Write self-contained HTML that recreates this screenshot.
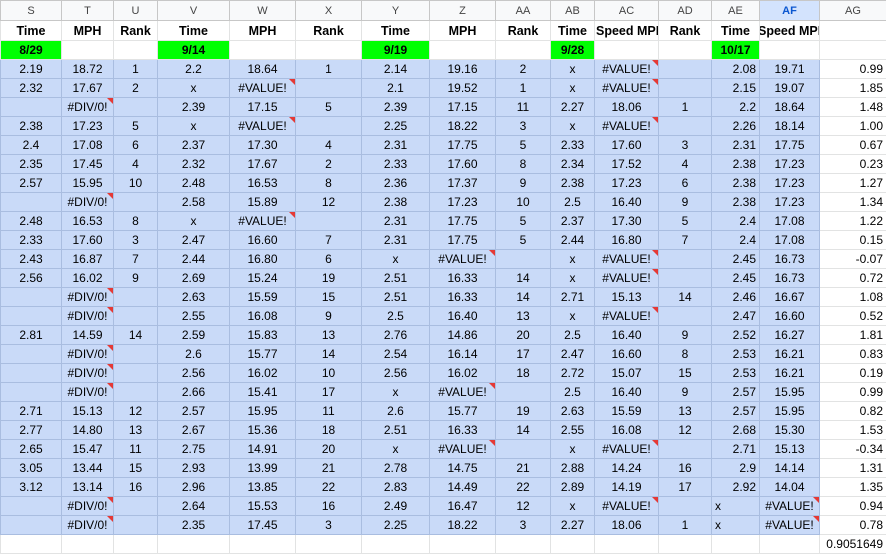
<!DOCTYPE html>
<html><head><meta charset="utf-8"><style>
body{margin:0;background:#fff;width:886px;height:556px;overflow:hidden}
table{width:886px;border-collapse:collapse;table-layout:fixed;font-family:"Liberation Sans",Arial,sans-serif;font-size:12px;color:#000}
td{height:18px;padding:0 3px;border:1px solid #e2e3e3;text-align:center;white-space:nowrap;overflow:hidden;position:relative;line-height:18px}
tr.h td{height:19px;font-size:11px;color:#444;background:#f8f9fa;border-color:#c7c7c7}
tr.h td.af{background:#d3e3fd;color:#0b57d0;font-weight:bold}
tr.t td{height:19px;font-weight:bold;font-size:12.5px}
td.g{background:#00ff00;font-weight:bold}
tr.d td{background:#c9daf8;border-color:#a9bde0}
tr.d td:last-child{background:#fff;border-color:#e2e3e3;text-align:right}
tr.d td:nth-child(13){text-align:right}
tr.d td.l{text-align:left}
td.e::after{content:"";position:absolute;top:0;right:0;border-top:6px solid #e53935;border-left:6px solid transparent}
td.r{text-align:right}
</style></head><body>
<table>
<colgroup><col style="width:61px"><col style="width:52px"><col style="width:44px"><col style="width:72px"><col style="width:66px"><col style="width:66px"><col style="width:68px"><col style="width:66px"><col style="width:55px"><col style="width:44px"><col style="width:64px"><col style="width:53px"><col style="width:48px"><col style="width:60px"><col style="width:67px"></colgroup>
<tr class="h"><td>S</td><td>T</td><td>U</td><td>V</td><td>W</td><td>X</td><td>Y</td><td>Z</td><td>AA</td><td>AB</td><td>AC</td><td>AD</td><td>AE</td><td class="af">AF</td><td>AG</td></tr>
<tr class="t"><td>Time</td><td>MPH</td><td>Rank</td><td>Time</td><td>MPH</td><td>Rank</td><td>Time</td><td>MPH</td><td>Rank</td><td>Time</td><td style="text-align:left;padding:0 1px">Speed MPH</td><td>Rank</td><td>Time</td><td style="text-align:left;padding:0"><span style="margin-left:-2px">Speed MPH</span></td><td></td></tr>
<tr><td class="g">8/29</td><td></td><td></td><td class="g">9/14</td><td></td><td></td><td class="g">9/19</td><td></td><td></td><td class="g">9/28</td><td></td><td></td><td class="g">10/17</td><td></td><td></td></tr>
<tr class="d"><td>2.19</td><td>18.72</td><td>1</td><td>2.2</td><td>18.64</td><td>1</td><td>2.14</td><td>19.16</td><td>2</td><td>x</td><td class="e">#VALUE!</td><td></td><td>2.08</td><td>19.71</td><td>0.99</td></tr>
<tr class="d"><td>2.32</td><td>17.67</td><td>2</td><td>x</td><td class="e">#VALUE!</td><td></td><td>2.1</td><td>19.52</td><td>1</td><td>x</td><td class="e">#VALUE!</td><td></td><td>2.15</td><td>19.07</td><td>1.85</td></tr>
<tr class="d"><td></td><td class="e">#DIV/0!</td><td></td><td>2.39</td><td>17.15</td><td>5</td><td>2.39</td><td>17.15</td><td>11</td><td>2.27</td><td>18.06</td><td>1</td><td>2.2</td><td>18.64</td><td>1.48</td></tr>
<tr class="d"><td>2.38</td><td>17.23</td><td>5</td><td>x</td><td class="e">#VALUE!</td><td></td><td>2.25</td><td>18.22</td><td>3</td><td>x</td><td class="e">#VALUE!</td><td></td><td>2.26</td><td>18.14</td><td>1.00</td></tr>
<tr class="d"><td>2.4</td><td>17.08</td><td>6</td><td>2.37</td><td>17.30</td><td>4</td><td>2.31</td><td>17.75</td><td>5</td><td>2.33</td><td>17.60</td><td>3</td><td>2.31</td><td>17.75</td><td>0.67</td></tr>
<tr class="d"><td>2.35</td><td>17.45</td><td>4</td><td>2.32</td><td>17.67</td><td>2</td><td>2.33</td><td>17.60</td><td>8</td><td>2.34</td><td>17.52</td><td>4</td><td>2.38</td><td>17.23</td><td>0.23</td></tr>
<tr class="d"><td>2.57</td><td>15.95</td><td>10</td><td>2.48</td><td>16.53</td><td>8</td><td>2.36</td><td>17.37</td><td>9</td><td>2.38</td><td>17.23</td><td>6</td><td>2.38</td><td>17.23</td><td>1.27</td></tr>
<tr class="d"><td></td><td class="e">#DIV/0!</td><td></td><td>2.58</td><td>15.89</td><td>12</td><td>2.38</td><td>17.23</td><td>10</td><td>2.5</td><td>16.40</td><td>9</td><td>2.38</td><td>17.23</td><td>1.34</td></tr>
<tr class="d"><td>2.48</td><td>16.53</td><td>8</td><td>x</td><td class="e">#VALUE!</td><td></td><td>2.31</td><td>17.75</td><td>5</td><td>2.37</td><td>17.30</td><td>5</td><td>2.4</td><td>17.08</td><td>1.22</td></tr>
<tr class="d"><td>2.33</td><td>17.60</td><td>3</td><td>2.47</td><td>16.60</td><td>7</td><td>2.31</td><td>17.75</td><td>5</td><td>2.44</td><td>16.80</td><td>7</td><td>2.4</td><td>17.08</td><td>0.15</td></tr>
<tr class="d"><td>2.43</td><td>16.87</td><td>7</td><td>2.44</td><td>16.80</td><td>6</td><td>x</td><td class="e">#VALUE!</td><td></td><td>x</td><td class="e">#VALUE!</td><td></td><td>2.45</td><td>16.73</td><td>-0.07</td></tr>
<tr class="d"><td>2.56</td><td>16.02</td><td>9</td><td>2.69</td><td>15.24</td><td>19</td><td>2.51</td><td>16.33</td><td>14</td><td>x</td><td class="e">#VALUE!</td><td></td><td>2.45</td><td>16.73</td><td>0.72</td></tr>
<tr class="d"><td></td><td class="e">#DIV/0!</td><td></td><td>2.63</td><td>15.59</td><td>15</td><td>2.51</td><td>16.33</td><td>14</td><td>2.71</td><td>15.13</td><td>14</td><td>2.46</td><td>16.67</td><td>1.08</td></tr>
<tr class="d"><td></td><td class="e">#DIV/0!</td><td></td><td>2.55</td><td>16.08</td><td>9</td><td>2.5</td><td>16.40</td><td>13</td><td>x</td><td class="e">#VALUE!</td><td></td><td>2.47</td><td>16.60</td><td>0.52</td></tr>
<tr class="d"><td>2.81</td><td>14.59</td><td>14</td><td>2.59</td><td>15.83</td><td>13</td><td>2.76</td><td>14.86</td><td>20</td><td>2.5</td><td>16.40</td><td>9</td><td>2.52</td><td>16.27</td><td>1.81</td></tr>
<tr class="d"><td></td><td class="e">#DIV/0!</td><td></td><td>2.6</td><td>15.77</td><td>14</td><td>2.54</td><td>16.14</td><td>17</td><td>2.47</td><td>16.60</td><td>8</td><td>2.53</td><td>16.21</td><td>0.83</td></tr>
<tr class="d"><td></td><td class="e">#DIV/0!</td><td></td><td>2.56</td><td>16.02</td><td>10</td><td>2.56</td><td>16.02</td><td>18</td><td>2.72</td><td>15.07</td><td>15</td><td>2.53</td><td>16.21</td><td>0.19</td></tr>
<tr class="d"><td></td><td class="e">#DIV/0!</td><td></td><td>2.66</td><td>15.41</td><td>17</td><td>x</td><td class="e">#VALUE!</td><td></td><td>2.5</td><td>16.40</td><td>9</td><td>2.57</td><td>15.95</td><td>0.99</td></tr>
<tr class="d"><td>2.71</td><td>15.13</td><td>12</td><td>2.57</td><td>15.95</td><td>11</td><td>2.6</td><td>15.77</td><td>19</td><td>2.63</td><td>15.59</td><td>13</td><td>2.57</td><td>15.95</td><td>0.82</td></tr>
<tr class="d"><td>2.77</td><td>14.80</td><td>13</td><td>2.67</td><td>15.36</td><td>18</td><td>2.51</td><td>16.33</td><td>14</td><td>2.55</td><td>16.08</td><td>12</td><td>2.68</td><td>15.30</td><td>1.53</td></tr>
<tr class="d"><td>2.65</td><td>15.47</td><td>11</td><td>2.75</td><td>14.91</td><td>20</td><td>x</td><td class="e">#VALUE!</td><td></td><td>x</td><td class="e">#VALUE!</td><td></td><td>2.71</td><td>15.13</td><td>-0.34</td></tr>
<tr class="d"><td>3.05</td><td>13.44</td><td>15</td><td>2.93</td><td>13.99</td><td>21</td><td>2.78</td><td>14.75</td><td>21</td><td>2.88</td><td>14.24</td><td>16</td><td>2.9</td><td>14.14</td><td>1.31</td></tr>
<tr class="d"><td>3.12</td><td>13.14</td><td>16</td><td>2.96</td><td>13.85</td><td>22</td><td>2.83</td><td>14.49</td><td>22</td><td>2.89</td><td>14.19</td><td>17</td><td>2.92</td><td>14.04</td><td>1.35</td></tr>
<tr class="d"><td></td><td class="e">#DIV/0!</td><td></td><td>2.64</td><td>15.53</td><td>16</td><td>2.49</td><td>16.47</td><td>12</td><td>x</td><td class="e">#VALUE!</td><td></td><td class="l">x</td><td class="e">#VALUE!</td><td>0.94</td></tr>
<tr class="d"><td></td><td class="e">#DIV/0!</td><td></td><td>2.35</td><td>17.45</td><td>3</td><td>2.25</td><td>18.22</td><td>3</td><td>2.27</td><td>18.06</td><td>1</td><td class="l">x</td><td class="e">#VALUE!</td><td>0.78</td></tr>
<tr><td></td><td></td><td></td><td></td><td></td><td></td><td></td><td></td><td></td><td></td><td></td><td></td><td></td><td></td><td class="r">0.9051649</td></tr>
</table>
</body></html>
